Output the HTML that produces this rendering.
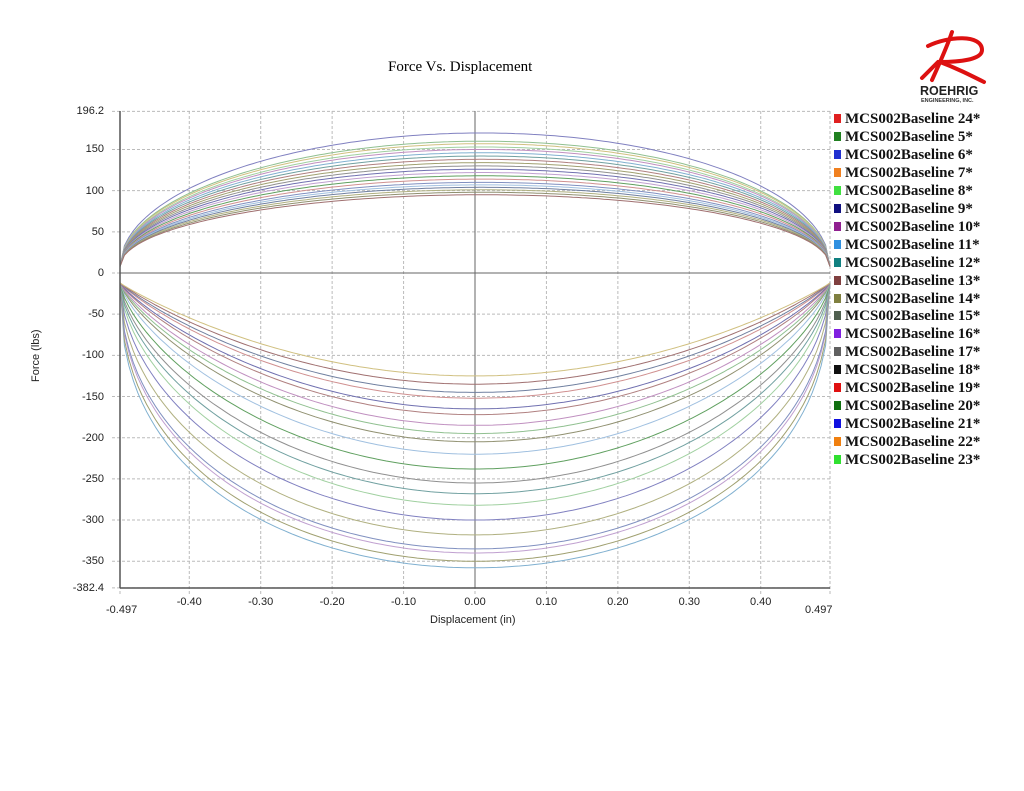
<!DOCTYPE html>
<html><head><meta charset="utf-8"><style>
body{margin:0;background:#fff;width:1024px;height:791px;overflow:hidden;position:relative;font-family:"Liberation Sans",sans-serif}
.t{position:absolute;font-size:11px;color:#222}
.leg{position:absolute;left:834px;top:111px;font-family:"Liberation Serif",serif;font-weight:bold;font-size:15px;line-height:17.95px;color:#111}
.leg div{white-space:nowrap}
.leg span{display:inline-block;width:7px;height:9px;margin-right:4px;vertical-align:0}
</style></head><body>
<div style="position:absolute;left:388px;top:59px;font-family:'Liberation Serif',serif;font-size:15px">Force Vs. Displacement</div>
<svg id="s" width="1024" height="791" style="position:absolute;left:0;top:0">
<g id="g"></g>
</svg>
<div id="labs"></div>
<div class="t" style="left:30px;top:382px;transform:rotate(-90deg);transform-origin:left top">Force (lbs)</div>
<div class="t" style="left:430px;top:614px">Displacement (in)</div>
<svg width="80" height="60" style="position:absolute;left:912px;top:28px">
<path d="M40 4 C36 16 30 30 20 52 M16 18 C36 8 70 6 70 22 C70 32 46 34 28 34 C44 40 56 46 72 54 M26 34 L10 50" stroke="#d11" stroke-width="4" fill="none" stroke-linecap="round"/>
</svg>
<div style="position:absolute;left:920px;top:84px;font-weight:bold;font-size:12.5px;color:#222">ROEHRIG</div>
<div style="position:absolute;left:921px;top:98px;font-weight:bold;font-size:5.5px;color:#333">ENGINEERING, INC.</div>
<div class="leg" id="leg"></div>
<script>
var cols=["#e02020","#208020","#2030d0","#f08020","#40e040","#101080","#902090","#3090e0","#108080","#804040","#808040","#506050","#8020e0","#606060","#101010","#e01010","#107010","#1010e0","#f08010","#30e030"];
var lc=["#8080c0","#90c090","#d0c080","#a0d0a0","#c090c0","#80b0d0","#70a0a0","#b08080","#a0a070","#909090","#7070b0","#c0a0d0","#60a060","#d09090","#8090c0","#a0c0e0","#7080a0","#b0b080","#909070","#a07070"];
var names=[24,5,6,7,8,9,10,11,12,13,14,15,16,17,18,19,20,21,22,23];
var leg=document.getElementById('leg');
names.forEach(function(n,i){leg.innerHTML+='<div><span style="background:'+cols[i]+'"></span>MCS002Baseline '+n+'*</div>';});
var g=document.getElementById('g');
function X(x){return 475+x*714.3}function Y(f){return 273-f*0.8235}
var h='';
var xt=[-0.497,-0.4,-0.3,-0.2,-0.1,0,0.1,0.2,0.3,0.4,0.497];
xt.forEach(function(v){h+='<line x1="'+X(v)+'" y1="111" x2="'+X(v)+'" y2="596" stroke="#bbb" stroke-dasharray="3,2"/>';});
var yt=[196.2,150,100,50,0,-50,-100,-150,-200,-250,-300,-350,-382.4];
yt.forEach(function(v){h+='<line x1="112" y1="'+Y(v)+'" x2="830" y2="'+Y(v)+'" stroke="#bbb" stroke-dasharray="3,2"/>';});
h+='<line x1="120" y1="273" x2="830" y2="273" stroke="#666"/><line x1="475" y1="111" x2="475" y2="588" stroke="#666"/>';
var ups=[170,160,157,153,150,146,142,138,134,130,126,122,118,114,110,107,104,101,98,95];
var lows=[358,350,340,335,318,300,282,268,255,238,220,205,195,185,172,165,152,145,135,125];
for(var i=0;i<20;i++){
 var P=ups[i],d='';
 for(var k=0;k<=160;k++){var u=-1+k/80;var x=u*0.497;var w=Math.max(0,1-u*u);var f=8+(P-8)*Math.pow(w,0.5)*(1+0.02*u);d+=(k?'L':'M')+X(x).toFixed(1)+' '+Y(f).toFixed(1);}
 h+='<path d="'+d+'" stroke="'+lc[i]+'" fill="none" stroke-width="1"/>';
 var L=lows[i],kk=0.41+(358-L)/233*0.53;d='';
 for(var k=0;k<=160;k++){var u=-1+k/80;var x=u*0.497;var w=Math.max(0,1-u*u);var f=-12-(L-12)*Math.pow(w,kk);d+=(k?'L':'M')+X(x).toFixed(1)+' '+Y(f).toFixed(1);}
 h+='<path d="'+d+'" stroke="'+lc[(i*3+5)%20]+'" fill="none" stroke-width="1"/>';
}
h+='<line x1="120" y1="111" x2="120" y2="588" stroke="#555" stroke-width="1.5"/><line x1="120" y1="588" x2="830" y2="588" stroke="#555" stroke-width="1.5"/>';
g.innerHTML=h;
var lb='';
yt.forEach(function(v){lb+='<div class="t" style="right:'+(1024-104)+'px;top:'+(Y(v)-6)+'px;text-align:right">'+v+'</div>';});
[-0.4,-0.3,-0.2,-0.1,0,0.1,0.2,0.3,0.4].forEach(function(v){lb+='<div class="t" style="left:'+(X(v)-15)+'px;top:596px;width:30px;text-align:center">'+v.toFixed(2)+'</div>';});
lb+='<div class="t" style="left:106px;top:604px">-0.497</div><div class="t" style="left:805px;top:604px">0.497</div>';
document.getElementById('labs').innerHTML=lb;
</script>
</body></html>
